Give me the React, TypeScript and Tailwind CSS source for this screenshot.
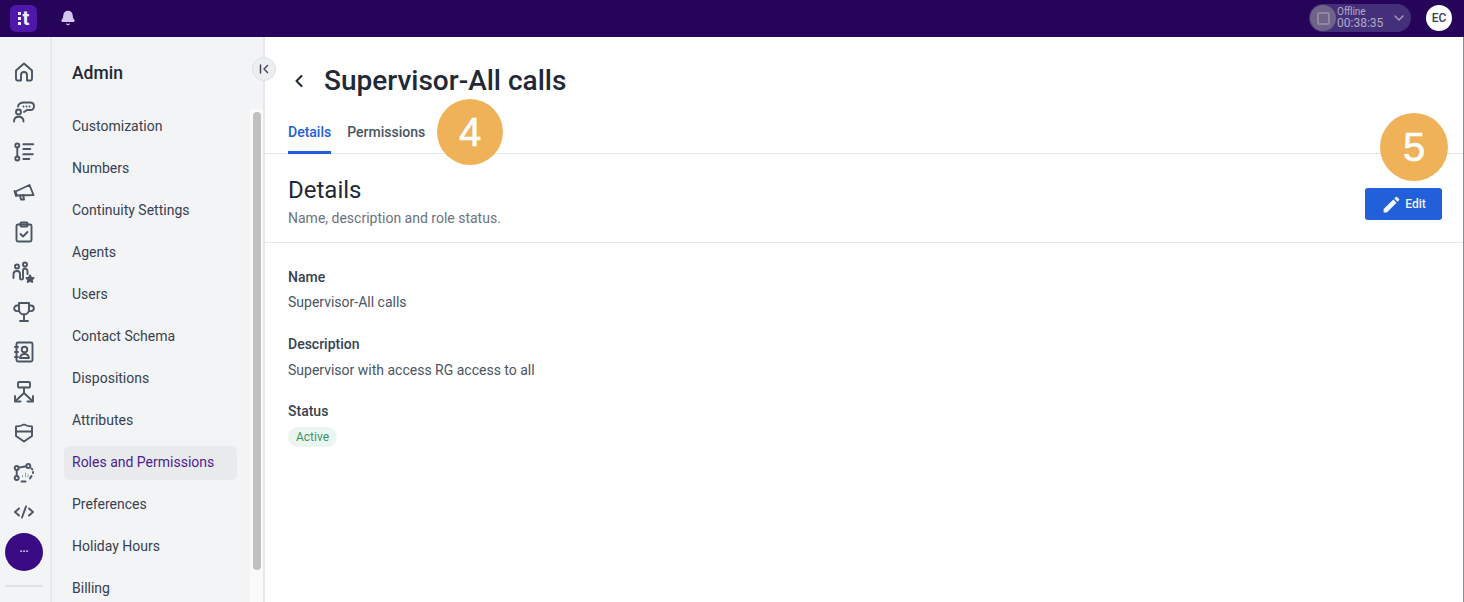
import { Bell, ChevronDown, ChevronLeft } from "lucide-react";
import type { ReactNode } from "react";

const menuItems = [
  "Customization",
  "Numbers",
  "Continuity Settings",
  "Agents",
  "Users",
  "Contact Schema",
  "Dispositions",
  "Attributes",
  "Roles and Permissions",
  "Preferences",
  "Holiday Hours",
  "Billing",
];

function Svg({ children }: { children: ReactNode }) {
  return (
    <svg width="24" height="24" viewBox="0 0 24 24" fill="none" stroke="#4b5563" strokeWidth="1.9" strokeLinecap="round" strokeLinejoin="round">
      {children}
    </svg>
  );
}

const railIcons: ReactNode[] = [
  <Svg key="home">
    <path d="M4 10.5L12 3.5l8 7V19a1.5 1.5 0 0 1-1.5 1.5H15V15a3 3 0 0 0-6 0v5.5H5.5A1.5 1.5 0 0 1 4 19z" />
  </Svg>,
  <Svg key="chat">
    <circle cx="6.5" cy="12" r="2.5" />
    <path d="M2 21.5c0-3 2-4.700 4.700-4.700s4.800 1.700 4.800 4.700" />
    <path d="M6 6.5C6.5 4 9 2.5 12 2.5h6c2.500 0 4 1.600 4 3.700 0 2-1.300 3.800-4 3.800h-3l-3 2" />
    <path d="M11.5 6.5h.01M14.5 6.5h.01M17.5 6.5h.01" />
  </Svg>,
  <Svg key="steps">
    <circle cx="5.3" cy="5.5" r="2" />
    <circle cx="5.3" cy="18.5" r="2" />
    <path d="M5.3 7.5v9M11.3 4.3h10M11.3 9h7M11.3 14.3h9.500M11.3 19h6" />
  </Svg>,
  <Svg key="megaphone">
    <path d="M3.5 11.5L17.500 5l4 10L5 15.500z" />
    <path d="M2.5 11l1.500 5" />
    <path d="M8 15.500l1 4h3l-.8-4.500" />
  </Svg>,
  <Svg key="clipboard">
    <rect x="4.5" y="4.5" width="15" height="17" rx="1.5" />
    <rect x="8.5" y="2.5" width="7" height="4" rx="0.8" />
    <path d="M8.5 14l2.500 2.500 4.500-4.500" />
  </Svg>,
  <Svg key="people">
    <circle cx="5" cy="6.5" r="2" />
    <circle cx="13" cy="4.5" r="2" />
    <path d="M1.5 18v-4c0-2 1-3 3.500-3s3 1 3 3v4.500c0 1.500 3 1.500 3 0V11c0-1.500 1-2.500 2-2.500s2.500 1 2.500 3V14" />
    <path d="M18 15.5l1.100 2.200 2.400.3-1.700 1.700.4 2.300-2.200-1.100-2.200 1.100.4-2.300-1.700-1.700 2.400-.3z" fill="#4b5563" />
  </Svg>,
  <Svg key="trophy">
    <path d="M7 3h10v6.500a5 5 0 0 1-10 0z" />
    <path d="M7 5.5H5a2.800 2.800 0 0 0 0 5.600h2.300M17 5.500h2a2.800 2.800 0 0 1 0 5.600h-2.300" />
    <path d="M12 14.5v6M8 21h8" />
  </Svg>,
  <Svg key="contacts">
    <rect x="4.5" y="2.5" width="16" height="19" rx="1.5" />
    <circle cx="12.5" cy="9.5" r="2.8" />
    <path d="M8 18c.4-2.600 2.200-4 4.500-4s4.100 1.400 4.500 4z" />
    <path d="M3 7h3M3 12h3M3 17h3" />
  </Svg>,
  <Svg key="flow">
    <rect x="6" y="2" width="12" height="5.5" rx="1" />
    <path d="M12 7.5V13M12 13l-8.500 8M12 13l8.500 8" />
    <path d="M3 16v5.500h5.500M21 16v5.500h-5.500" />
  </Svg>,
  <Svg key="shield">
    <path d="M4 6.5c3 0 5.500-.8 8-2 2.500 1.200 5 2 8 2V16l-8 5.500L4 16z" />
    <path d="M4 11.5h16" />
  </Svg>,
  <Svg key="graph">
    <circle cx="4.7" cy="8" r="2" />
    <circle cx="16.3" cy="6" r="2" />
    <circle cx="4.7" cy="18" r="2" />
    <path d="M6.7 7.6l7.600-1.300M4.7 10v6M9.5 21.5h4M18 18.5l1.500-2.500M21 12v1M19.5 8.5l.8 1" />
    <path d="M10.5 17v-1.500M13.5 17v-4M16 17v-2.500" strokeWidth="1" stroke="#9ca3af" />
  </Svg>,
  <Svg key="code">
    <path d="M7 8.5L3 12l4 3.500M17 8.500l4 3.500-4 3.500M14 6.500l-4 11" />
  </Svg>,
];

export default function App() {
  return (
    <div className="flex h-[602px] w-[1464px] flex-col overflow-hidden bg-white font-['Roboto',sans-serif] text-[#1f2937]">
      {/* Top bar */}
      <header className="flex h-[37px] shrink-0 items-center justify-between bg-[#26045a] pb-[1px] pl-[10px] pr-[12px]">
        <div className="flex items-center gap-[23px]">
          <div className="flex h-[27px] w-[27px] items-center justify-center gap-[2px] rounded-md bg-[#4f18a8] font-['Inter',sans-serif] text-[19px] font-bold leading-none text-[#f3f0fa]">
            <span className="flex flex-col gap-[2px]">
              <span className="h-[3px] w-[3px] bg-[#f3f0fa]" />
              <span className="h-[3px] w-[3px] bg-[#f3f0fa]" />
              <span className="h-[3px] w-[3px] bg-[#f3f0fa]" />
            </span>
            t
          </div>
          <Bell size={16} fill="#d6c7ee" color="#d6c7ee" />
        </div>
        <div className="flex items-center gap-[15px]">
          <div className="flex h-[28px] w-[102px] items-center rounded-full bg-[#44307a] pl-[1px]">
            <div className="flex h-[26px] w-[26px] items-center justify-center rounded-full bg-[#6f6389]">
              <div className="h-[13px] w-[13px] rounded-[2px] border-2 border-[#91879f]" />
            </div>
            <div className="ml-[1px] flex w-[48px] flex-col text-[#b3aac4]">
              <span className="text-[10px] leading-[11px]">Offline</span>
              <span className="text-[12px] leading-[13px]">00:38:35</span>
            </div>
            <ChevronDown size={16} color="#a99fbd" className="ml-[6px]" />
          </div>
          <div className="flex h-[26px] w-[26px] items-center justify-center rounded-full bg-white text-[12px] font-medium text-[#374151]">
            EC
          </div>
        </div>
      </header>

      <div className="flex min-h-0 flex-1">
        {/* Icon rail */}
        <nav className="flex w-[52px] shrink-0 flex-col items-center border-r-2 border-[#e8eaed] bg-[#f3f4f6] pr-[2px] pt-[23px]">
          <div className="flex flex-col items-center gap-[16px]">
            {railIcons.map((icon, i) => (
              <div key={i} className="flex h-[24px] w-[24px] items-center justify-center">
                {icon}
              </div>
            ))}
          </div>
          <div className="mt-[9px] flex h-[38px] w-[38px] shrink-0 items-center justify-center rounded-full bg-[#3a0a82] text-[10px] font-bold leading-none text-[#e5dff2]">
            ···
          </div>
          <div className="mt-[14px] h-[2px] w-[38px] shrink-0 bg-[#dfe1e5]" />
        </nav>

        {/* Admin menu */}
        <aside className="relative flex w-[213px] shrink-0 flex-col border-r-2 border-[#e5e7eb] bg-[#f3f4f6]">
          <h2 className="ml-[20px] mt-[24px] text-[17.5px] font-medium leading-[24px] text-[#1f2937]">Admin</h2>
          <button className="absolute right-[-13px] top-[20px] flex h-[24px] w-[24px] items-center justify-center rounded-full border border-[#dfe1e5] bg-[#eceef0] text-[#374151]">
            <svg width="12" height="12" viewBox="0 0 12 12" fill="none" stroke="currentColor" strokeWidth="1.4" strokeLinecap="round" strokeLinejoin="round">
              <path d="M2.5 2v8M9.5 2.500L6 6l3.500 3.500" />
            </svg>
          </button>
          <div className="mt-[11px] flex min-h-0 flex-1">
            <ul className="flex-1 pl-[12px] pr-[13px] pt-[14px]">
              {menuItems.map((item) => {
                const active = item === "Roles and Permissions";
                return (
                  <li
                    key={item}
                    className={`mb-[8px] flex h-[34px] items-center rounded-md pb-[1px] pl-[8px] text-[14px] ${
                      active ? "bg-[#e9eaec] text-[#4c1d95]" : "text-[#374151]"
                    }`}
                  >
                    {item}
                  </li>
                );
              })}
            </ul>
            <div className="mt-[13px] w-[13px] shrink-0 bg-[#fafafa] pl-[3px] pt-[3px]">
              <div className="h-[458px] w-[8px] rounded-full bg-[#c1c1c1]" />
            </div>
          </div>
        </aside>

        {/* Main */}
        <main className="relative flex min-w-0 flex-1 flex-col">
          <div className="flex h-[44px] items-center pl-[24px] pt-[43px]">
            <ChevronLeft size={20} color="#1f2937" strokeWidth={2.5} />
            <h1 className="ml-[15px] text-[28px] font-medium leading-[36px] text-[#1f2937]">Supervisor-All calls</h1>
          </div>

          <div className="mt-[30px] flex h-[43px] gap-[16px] border-b border-[#e5e7eb] pl-[23px]">
            <div className="flex h-[43px] items-center border-b-[3px] border-[#2160d9] pt-[2px] text-[14px] font-medium text-[#2160d9]">
              Details
            </div>
            <div className="flex h-[43px] items-center pb-[1px] text-[14px] font-medium text-[#4b5563]">
              Permissions
            </div>
          </div>

          <div className="flex h-[89px] items-start justify-between border-b border-[#e5e7eb] pl-[23px] pr-[22px]">
            <div>
              <h2 className="mt-[22px] text-[24px] leading-[28px] text-[#1f2937]">Details</h2>
              <p className="mt-[5px] text-[14px] leading-[18px] text-[#6b7280]">Name, description and role status.</p>
            </div>
            <button className="mt-[34px] flex h-[32px] w-[77px] items-center justify-center gap-[3px] rounded-[3px] bg-[#2160d9] text-[12px] font-medium text-[#f0f4fd]">
              <svg width="21" height="21" viewBox="0 0 24 24" fill="#f0f4fd">
                <path d="M3 17.25V21h3.750L17.810 9.940l-3.750-3.750L3 17.250zM20.710 7.040a1 1 0 0 0 0-1.410l-2.340-2.340a1 1 0 0 0-1.410 0l-1.830 1.830 3.750 3.750 1.830-1.830z" />
              </svg>
              Edit
            </button>
          </div>

          <dl className="pl-[23px] pt-[24px] text-[14px] leading-[20px]">
            <dt className="font-medium text-[#374151]">Name</dt>
            <dd className="mt-[5px] text-[#4b5563]">Supervisor-All calls</dd>
            <dt className="mt-[22px] font-medium text-[#374151]">Description</dt>
            <dd className="mt-[6px] text-[#4b5563]">Supervisor with access RG access to all</dd>
            <dt className="mt-[21px] font-medium text-[#374151]">Status</dt>
            <dd className="mt-[5px]">
              <span className="inline-flex h-[20px] w-[49px] items-center justify-center rounded-full bg-[#ebf6f0] text-[12px] text-[#3c9565]">
                Active
              </span>
            </dd>
          </dl>

          {/* Step badges */}
          <div className="absolute left-[172px] top-[62px] flex h-[66px] w-[66px] items-center justify-center rounded-full bg-[#f0b258] font-['Liberation_Sans',sans-serif] text-[40px] text-white [-webkit-text-stroke:0.6px_white]">
            4
          </div>
          <div className="absolute left-[1115px] top-[76px] flex h-[68px] w-[68px] items-center justify-center rounded-full bg-[#f0b258] font-['Liberation_Sans',sans-serif] text-[40px] text-white [-webkit-text-stroke:0.6px_white]">
            5
          </div>

          <div className="absolute bottom-0 right-0 top-0 w-px bg-[#8d8a96]" />
        </main>
      </div>
    </div>
  );
}
